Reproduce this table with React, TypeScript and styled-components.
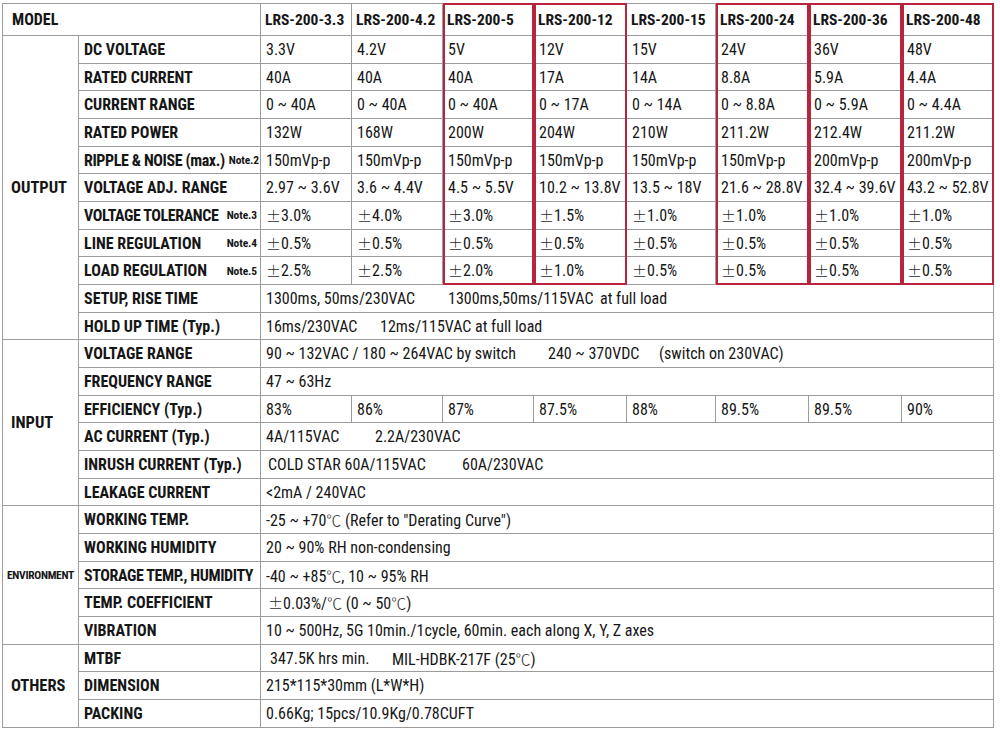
import React from "react";
import styled, { createGlobalStyle } from "styled-components";

const LINE = "#9c9c9c";
const RED = "#b8243c";
const COLS = "76px 182px 91px 91px 91px 93px 89px 93px 93px 92px";
const ROWS = "32px repeat(25, 27.68px)";

const Global = createGlobalStyle`
  html, body { margin: 0; padding: 0; background: #ffffff; }
  body { width: 1000px; height: 731px; overflow: hidden; }
`;

const Page = styled.div`
  padding: 3px 0 0 2px;
`;

const Stack = styled.div`
  display: grid;
  width: max-content;
`;

const Table = styled.div`
  grid-area: 1 / 1;
  display: grid;
  grid-template-columns: ${COLS};
  grid-template-rows: ${ROWS};
  border-top: 1px solid ${LINE};
  border-left: 1px solid ${LINE};
  color: #161616;
  font-family: "Roboto Condensed", "Liberation Sans", sans-serif;
`;

const Overlay = styled.div`
  grid-area: 1 / 1;
  display: grid;
  grid-template-columns: ${COLS};
  grid-template-rows: ${ROWS};
  border-top: 1px solid transparent;
  border-left: 1px solid transparent;
  pointer-events: none;
  z-index: 2;
`;

const RedBox = styled.div<{ $col: number }>`
  grid-column: ${(p) => p.$col};
  grid-row: 1 / 11;
  margin-top: -1px;
  border: 2px solid ${RED};
`;

const Cell = styled.div`
  display: flex;
  align-items: center;
  box-sizing: border-box;
  border-right: 1px solid ${LINE};
  border-bottom: 1px solid ${LINE};
  white-space: nowrap;
  overflow: hidden;
  min-width: 0;
`;

const ModelHead = styled(Cell)`
  grid-column: span 2;
  padding-left: 9px;
  font-weight: 700;
  font-size: 16px;
`;

const ModelName = styled(Cell)`
  padding-left: 4px;
  font-weight: 700;
  font-size: 15.5px;
`;

const Group = styled(Cell)<{ $span: number; $small?: boolean }>`
  grid-row: span ${(p) => p.$span};
  padding-left: ${(p) => (p.$small ? "4px" : "8px")};
  font-weight: 700;
  font-size: ${(p) => (p.$small ? "11.5px" : "16.5px")};
  letter-spacing: ${(p) => (p.$small ? "-0.3px" : "0")};
`;

const Label = styled(Cell)<{ $tight?: boolean }>`
  padding: 0 3px 0 5px;
  font-weight: 700;
  font-size: 16px;
  letter-spacing: ${(p) => (p.$tight ? "-0.4px" : "0")};
`;

const Note = styled.span`
  margin-left: auto;
  padding-left: 4px;
  font-size: 11.5px;
  font-weight: 700;
  letter-spacing: -0.1px;
`;

const Value = styled(Cell)<{ $span?: number; $pad?: number }>`
  grid-column: span ${(p) => p.$span ?? 1};
  padding-left: ${(p) => p.$pad ?? 5}px;
  font-size: 16px;
  font-weight: 400;
`;

const Seg = styled.span<{ $w?: number }>`
  display: inline-block;
  flex: none;
  width: ${(p) => (p.$w ? `${p.$w}px` : "auto")};
`;

const Sym = styled.span`
  font-family: "Noto Sans CJK SC", "DejaVu Sans", sans-serif;
  font-feature-settings: "fwid";
  font-weight: 300;
  font-size: 15px;
  color: #2a2a2a;
`;

function rich(text: string) {
  const parts = text.split(/(±|℃)/);
  return parts.map((p, i) =>
    p === "±" || p === "℃" ? <Sym key={i}>{p}</Sym> : <React.Fragment key={i}>{p}</React.Fragment>
  );
}

type SegData = { t: string; w?: number };
type Row =
  | { label: string; note?: string; tight?: boolean; values: string[] }
  | { label: string; note?: string; tight?: boolean; shared: SegData[]; pad?: number };

type Section = { name: string; small?: boolean; rows: Row[] };

const MODELS = [
  "LRS-200-3.3",
  "LRS-200-4.2",
  "LRS-200-5",
  "LRS-200-12",
  "LRS-200-15",
  "LRS-200-24",
  "LRS-200-36",
  "LRS-200-48",
];

const SECTIONS: Section[] = [
  {
    name: "OUTPUT",
    rows: [
      { label: "DC VOLTAGE", values: ["3.3V", "4.2V", "5V", "12V", "15V", "24V", "36V", "48V"] },
      { label: "RATED CURRENT", values: ["40A", "40A", "40A", "17A", "14A", "8.8A", "5.9A", "4.4A"] },
      {
        label: "CURRENT RANGE",
        values: ["0 ~ 40A", "0 ~ 40A", "0 ~ 40A", "0 ~ 17A", "0 ~ 14A", "0 ~ 8.8A", "0 ~ 5.9A", "0 ~ 4.4A"],
      },
      {
        label: "RATED POWER",
        values: ["132W", "168W", "200W", "204W", "210W", "211.2W", "212.4W", "211.2W"],
      },
      {
        label: "RIPPLE & NOISE (max.)",
        note: "Note.2",
        tight: true,
        values: ["150mVp-p", "150mVp-p", "150mVp-p", "150mVp-p", "150mVp-p", "150mVp-p", "200mVp-p", "200mVp-p"],
      },
      {
        label: "VOLTAGE ADJ. RANGE",
        values: [
          "2.97 ~ 3.6V",
          "3.6 ~ 4.4V",
          "4.5 ~ 5.5V",
          "10.2 ~ 13.8V",
          "13.5 ~ 18V",
          "21.6 ~ 28.8V",
          "32.4 ~ 39.6V",
          "43.2 ~ 52.8V",
        ],
      },
      {
        label: "VOLTAGE TOLERANCE",
        note: "Note.3",
        tight: true,
        values: ["±3.0%", "±4.0%", "±3.0%", "±1.5%", "±1.0%", "±1.0%", "±1.0%", "±1.0%"],
      },
      {
        label: "LINE REGULATION",
        note: "Note.4",
        values: ["±0.5%", "±0.5%", "±0.5%", "±0.5%", "±0.5%", "±0.5%", "±0.5%", "±0.5%"],
      },
      {
        label: "LOAD REGULATION",
        note: "Note.5",
        values: ["±2.5%", "±2.5%", "±2.0%", "±1.0%", "±0.5%", "±0.5%", "±0.5%", "±0.5%"],
      },
      {
        label: "SETUP, RISE TIME",
        shared: [{ t: "1300ms, 50ms/230VAC", w: 182 }, { t: "1300ms,50ms/115VAC", w: 152 }, { t: "at full load" }],
      },
      {
        label: "HOLD UP TIME (Typ.)",
        shared: [{ t: "16ms/230VAC", w: 114 }, { t: "12ms/115VAC at full load" }],
      },
    ],
  },
  {
    name: "INPUT",
    rows: [
      {
        label: "VOLTAGE RANGE",
        shared: [
          { t: "90 ~ 132VAC / 180 ~ 264VAC by switch", w: 282 },
          { t: "240 ~ 370VDC", w: 111 },
          { t: "(switch on 230VAC)" },
        ],
      },
      { label: "FREQUENCY RANGE", shared: [{ t: "47 ~ 63Hz" }] },
      {
        label: "EFFICIENCY (Typ.)",
        values: ["83%", "86%", "87%", "87.5%", "88%", "89.5%", "89.5%", "90%"],
      },
      {
        label: "AC CURRENT (Typ.)",
        shared: [{ t: "4A/115VAC", w: 109 }, { t: "2.2A/230VAC" }],
      },
      {
        label: "INRUSH CURRENT (Typ.)",
        pad: 7,
        shared: [{ t: "COLD STAR 60A/115VAC", w: 194 }, { t: "60A/230VAC" }],
      },
      { label: "LEAKAGE CURRENT", shared: [{ t: "<2mA / 240VAC" }] },
    ],
  },
  {
    name: "ENVIRONMENT",
    small: true,
    rows: [
      { label: "WORKING TEMP.", shared: [{ t: "-25 ~ +70℃ (Refer to \"Derating Curve\")" }] },
      { label: "WORKING HUMIDITY", shared: [{ t: "20 ~ 90% RH non-condensing" }] },
      { label: "STORAGE TEMP., HUMIDITY", tight: true, shared: [{ t: "-40 ~ +85℃, 10 ~ 95% RH" }] },
      { label: "TEMP. COEFFICIENT", pad: 7, shared: [{ t: "±0.03%/℃ (0 ~ 50℃)" }] },
      {
        label: "VIBRATION",
        shared: [{ t: "10 ~ 500Hz, 5G 10min./1cycle, 60min. each along X, Y, Z axes" }],
      },
    ],
  },
  {
    name: "OTHERS",
    rows: [
      {
        label: "MTBF",
        pad: 9,
        shared: [{ t: "347.5K hrs min.", w: 122 }, { t: "MIL-HDBK-217F (25℃)" }],
      },
      { label: "DIMENSION", shared: [{ t: "215*115*30mm (L*W*H)" }] },
      { label: "PACKING", shared: [{ t: "0.66Kg; 15pcs/10.9Kg/0.78CUFT" }] },
    ],
  },
];

const RED_COLS = [5, 6, 8, 9, 10];

export default function App() {
  return (
    <Page>
      <Global />
      <Stack>
        <Table>
          <ModelHead>MODEL</ModelHead>
          {MODELS.map((m) => (
            <ModelName key={m}>{m}</ModelName>
          ))}
          {SECTIONS.map((s) => (
            <React.Fragment key={s.name}>
              <Group $span={s.rows.length} $small={s.small}>
                {s.name}
              </Group>
              {s.rows.map((r) => (
                <React.Fragment key={r.label}>
                  <Label $tight={r.tight}>
                    {r.label}
                    {r.note && <Note>{r.note}</Note>}
                  </Label>
                  {"values" in r ? (
                    r.values.map((v, i) => <Value key={i}>{rich(v)}</Value>)
                  ) : (
                    <Value $span={8} $pad={r.pad}>
                      {r.shared.map((sg, i) => (
                        <Seg key={i} $w={sg.w}>
                          {rich(sg.t)}
                        </Seg>
                      ))}
                    </Value>
                  )}
                </React.Fragment>
              ))}
            </React.Fragment>
          ))}
        </Table>
        <Overlay>
          {RED_COLS.map((c) => (
            <RedBox key={c} $col={c} />
          ))}
        </Overlay>
      </Stack>
    </Page>
  );
}
